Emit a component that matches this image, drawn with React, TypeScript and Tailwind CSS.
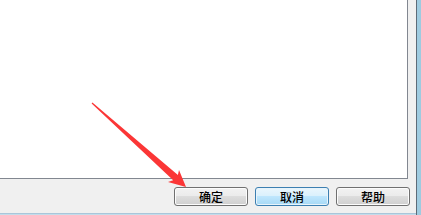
import React from "react";

function Btn({ label, focused }: { label: string; focused?: boolean }) {
  return (
    <div
      className={
        focused
          ? "w-[74px] h-[19px] rounded-[3px] border border-[#3c7fb1] bg-[linear-gradient(to_bottom,#eaf6fd_0%,#d9f0fc_50%,#bee6fd_50%,#a7d9f5_100%)] shadow-[inset_0_0_0_1px_#e8f4fb] flex items-center justify-center text-[12px] leading-none font-medium text-black"
          : "w-[74px] h-[19px] rounded-[3px] border border-[#707070] bg-[linear-gradient(to_bottom,#f2f2f2_0%,#ebebeb_50%,#dddddd_50%,#cfcfcf_100%)] shadow-[inset_0_0_0_1px_#fcfcfc] flex items-center justify-center text-[12px] leading-none font-medium text-black"
      }
      style={{ fontFamily: '"Noto Sans CJK SC", "Noto Sans", sans-serif' }}
    >
      <span className="pt-[1px]">{label}</span>
    </div>
  );
}

export default function App() {
  return (
    <div className="relative w-[421px] h-[215px] flex overflow-hidden bg-[#f0f0f0]">
      <div className="w-[416px] flex flex-col">
        <div className="h-[179px] mr-[8px] bg-white border-r border-b border-[#828790]" />
        <div className="h-[34px] flex gap-[7px] pl-[174px] pt-[8px]">
          <Btn label="确定" />
          <Btn label="取消" focused />
          <Btn label="帮助" />
        </div>
        <div className="h-[1px] bg-[#a9c6da]" />
        <div className="h-[1px] bg-[#c4dcea]" />
      </div>
      <div className="w-[1px] bg-[#5d6b78]" />
      <div className="w-[4px] bg-[#9ecbe0]" />
      <svg
        className="absolute left-0 top-0"
        width="421"
        height="215"
        viewBox="0 0 421 215"
      >
        <polygon
          points="92.4,102.6 177.9,175.1 179,170 186,187 168,182 173.2,180.3 91.6,103.4"
          fill="#fb3636"
        />
      </svg>
    </div>
  );
}
